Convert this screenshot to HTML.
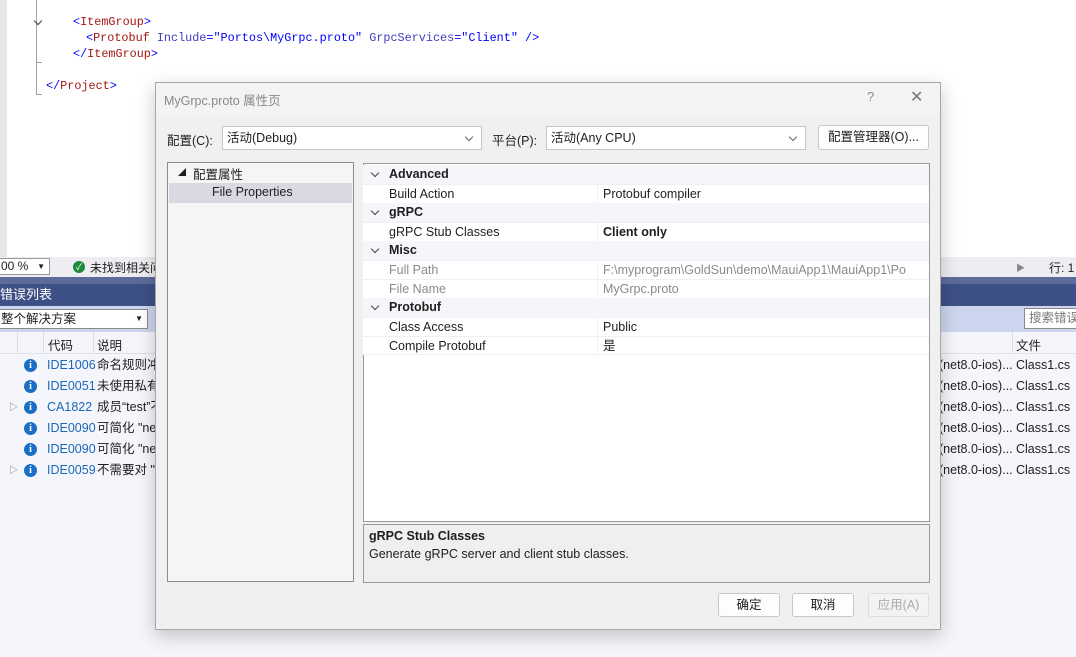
<!DOCTYPE html><html><head><meta charset="utf-8"><style>
*{box-sizing:border-box;margin:0;padding:0}
body{width:1076px;height:657px;position:relative;overflow:hidden;background:#f5f6fb;font-family:"Liberation Sans","Noto Sans CJK SC",sans-serif;font-size:12px;color:#1e1e1e}
.a{position:absolute}
.mono{font-family:"Liberation Mono","Noto Sans CJK SC",monospace;font-size:11.8px}
.r{color:#a31515}.b{color:#0000ff}.n{color:#3f3fbf}
.row{position:absolute;left:0;width:1076px;height:21px;line-height:21px;font-size:12.5px}
.info{position:absolute;left:24px;top:4px;width:13px;height:13px;border-radius:50%;background:#1a6fc4;color:#fff;font-size:10px;line-height:13px;text-align:center;font-weight:bold;font-family:"Liberation Serif",serif}
.code{position:absolute;left:47px;color:#1a66b8}
.desc{position:absolute;left:97px}
.proj{position:absolute;left:939px}
.file{position:absolute;left:1016px}
.pr{position:absolute;left:363px;width:566px;height:19px;line-height:19px;font-size:12.5px}
.pr .k{position:absolute;left:26px}.pr .v{position:absolute;left:240px;white-space:nowrap;overflow:hidden;width:326px}
.cat{background:#f4f6f9;font-weight:bold}
.cat:before{content:"";position:absolute;left:9px;top:5px;width:5px;height:5px;border-right:1px solid #444;border-bottom:1px solid #444;transform:rotate(45deg)}
.item{background:#fff;border-top:1px solid #eef0f3}
.item .v{border-left:1px solid #eef0f3;padding-left:5px;left:234px}
.gray{color:#8a8a8a}
.btn{position:absolute;height:24px;border:1px solid #c8c8c8;border-radius:3px;background:#fdfdfd;text-align:center;line-height:22px;font-size:12.5px}
.combo{position:absolute;height:24px;border:1px solid #c6c6c6;background:#fff;line-height:22px;padding-left:4px;font-size:12.5px}
.combo:after{content:"";position:absolute;right:9px;top:7px;width:5px;height:5px;border-right:1px solid #666;border-bottom:1px solid #666;transform:rotate(45deg)}
</style></head><body>
<div class="a" style="left:0;top:0;width:1076px;height:257px;background:#fff"></div>
<div class="a" style="left:0;top:0;width:7px;height:257px;background:#e6e6e6"></div>
<div class="a" style="left:36px;top:0;width:1px;height:95px;background:#a0a0a0"></div>
<div class="a" style="left:36px;top:62px;width:6px;height:1px;background:#a0a0a0"></div>
<div class="a" style="left:36px;top:94px;width:6px;height:1px;background:#a0a0a0"></div>
<div class="a" style="left:35px;top:18px;width:6px;height:6px;border-right:1px solid #444;border-bottom:1px solid #444;transform:rotate(45deg)"></div>
<div class="a mono" style="left:73px;top:15px"><span class="b">&lt;</span><span class="r">ItemGroup</span><span class="b">&gt;</span></div>
<div class="a mono" style="left:86px;top:31px"><span class="b">&lt;</span><span class="r">Protobuf</span> <span class="n">Include</span><span class="b">="Portos\MyGrpc.proto"</span> <span class="n">GrpcServices</span><span class="b">="Client"</span> <span class="b">/&gt;</span></div>
<div class="a mono" style="left:73px;top:47px"><span class="b">&lt;/</span><span class="r">ItemGroup</span><span class="b">&gt;</span></div>
<div class="a mono" style="left:46px;top:79px"><span class="b">&lt;/</span><span class="r">Project</span><span class="b">&gt;</span></div>
<div class="a" style="left:0;top:257px;width:1076px;height:20px;background:#eeeef2"></div>
<div class="a" style="left:-2px;top:258px;width:52px;height:17px;border:1px solid #999;background:#fff;font-size:12px;line-height:15px;padding-left:2px">00 %<span style="position:absolute;right:4px;font-size:8px">▼</span></div>
<div class="a" style="left:73px;top:261px;width:12px;height:12px;border-radius:50%;background:#1e8a3a;color:#fff;font-size:9px;line-height:12px;text-align:center">✓</div>
<div class="a" style="left:90px;top:259px;font-size:12px">未找到相关问</div>
<div class="a" style="left:1016px;top:261px;font-size:9px;color:#888">▶</div>
<div class="a" style="left:1049px;top:259px;font-size:12px">行: 1</div>
<div class="a" style="left:0;top:277px;width:1076px;height:7px;background:#5d6b9a"></div>
<div class="a" style="left:0;top:284px;width:1076px;height:22px;background:#3e5187;color:#fff;font-size:13px;line-height:22px">错误列表</div>
<div class="a" style="left:0;top:306px;width:1076px;height:26px;background:#cdd6ef"></div>
<div class="a" style="left:-2px;top:309px;width:150px;height:20px;border:1px solid #8a8a8a;background:#fff;font-size:12.5px;line-height:18px;padding-left:2px">整个解决方案<span style="position:absolute;right:4px;font-size:8px">▼</span></div>
<div class="a" style="left:1024px;top:308px;width:60px;height:21px;border:1px solid #8a8a8a;background:#fff;color:#777;font-size:12.5px;line-height:19px;padding-left:4px">搜索错误</div>
<div class="a" style="left:0;top:332px;width:1076px;height:22px;background:#f5f6fb;border-bottom:1px solid #e0e0e8"></div>
<div class="a" style="left:17px;top:332px;width:1px;height:22px;background:#ddd"></div>
<div class="a" style="left:43px;top:332px;width:1px;height:22px;background:#ddd"></div>
<div class="a" style="left:93px;top:332px;width:1px;height:22px;background:#ddd"></div>
<div class="a" style="left:1012px;top:332px;width:1px;height:22px;background:#ddd"></div>
<div class="a" style="left:48px;top:335px;font-size:12.5px">代码</div>
<div class="a" style="left:97px;top:335px;font-size:12.5px">说明</div>
<div class="a" style="left:1016px;top:335px;font-size:12.5px">文件</div>
<div class="row" style="top:355px"><span class="info">i</span><span class="code">IDE1006</span><span class="desc">命名规则冲</span><span class="proj">(net8.0-ios)...</span><span class="file">Class1.cs</span></div>
<div class="row" style="top:376px"><span class="info">i</span><span class="code">IDE0051</span><span class="desc">未使用私有</span><span class="proj">(net8.0-ios)...</span><span class="file">Class1.cs</span></div>
<div class="row" style="top:397px"><span class="a" style="left:9px;color:#777;font-size:9px">▷</span><span class="info">i</span><span class="code">CA1822</span><span class="desc">成员“test”不</span><span class="proj">(net8.0-ios)...</span><span class="file">Class1.cs</span></div>
<div class="row" style="top:418px"><span class="info">i</span><span class="code">IDE0090</span><span class="desc">可简化 "ne</span><span class="proj">(net8.0-ios)...</span><span class="file">Class1.cs</span></div>
<div class="row" style="top:439px"><span class="info">i</span><span class="code">IDE0090</span><span class="desc">可简化 "ne</span><span class="proj">(net8.0-ios)...</span><span class="file">Class1.cs</span></div>
<div class="row" style="top:460px"><span class="a" style="left:9px;color:#777;font-size:9px">▷</span><span class="info">i</span><span class="code">IDE0059</span><span class="desc">不需要对 "</span><span class="proj">(net8.0-ios)...</span><span class="file">Class1.cs</span></div>
<div class="a" style="left:155px;top:82px;width:786px;height:548px;background:#f0f0f0;border:1px solid #a8a8a8;box-shadow:0 6px 18px rgba(0,0,0,0.22)">
 <div class="a" style="left:0;top:0;width:784px;height:32px;background:#f3f3f3"></div>
 <div class="a" style="left:8px;top:7px;font-size:12.5px;color:#888">MyGrpc.proto 属性页</div>
 <div class="a" style="left:711px;top:6px;font-size:13px;color:#888">?</div>
 <div class="a" style="left:754px;top:4px;font-size:16px;color:#777">✕</div>
 <div class="a" style="left:11px;top:47px;font-size:12.5px">配置(C):</div>
 <div class="combo" style="left:66px;top:43px;width:260px">活动(Debug)</div>
 <div class="a" style="left:336px;top:47px;font-size:12.5px">平台(P):</div>
 <div class="combo" style="left:390px;top:43px;width:260px">活动(Any CPU)</div>
 <div class="btn" style="left:662px;top:42px;width:111px;height:25px">配置管理器(O)...</div>
 <div class="a" style="left:11px;top:79px;width:187px;height:420px;border:1px solid #8c8c8c;background:#f5f5f5"></div>
 <div class="a" style="left:22px;top:84px;font-size:8px">◢</div>
 <div class="a" style="left:37px;top:81px;font-size:12.5px">配置属性</div>
 <div class="a" style="left:13px;top:100px;width:183px;height:20px;background:#d9d9e3"></div>
 <div class="a" style="left:56px;top:102px;font-size:12.5px">File Properties</div>
 <div class="a" style="left:207px;top:80px;width:567px;height:359px;border:1px solid #999;background:#fff"></div>
 <div class="a" style="left:207px;top:441px;width:567px;height:59px;border:1px solid #999;background:#efefef"></div>
 <div class="a" style="left:213px;top:446px;font-size:12.5px;font-weight:bold">gRPC Stub Classes</div>
 <div class="a" style="left:213px;top:464px;font-size:12.5px">Generate gRPC server and client stub classes.</div>
 <div class="btn" style="left:562px;top:510px;width:62px">确定</div>
 <div class="btn" style="left:636px;top:510px;width:62px">取消</div>
 <div class="btn" style="left:712px;top:510px;width:61px;color:#aaa;border-color:#ddd;background:#f3f3f3">应用(A)</div>
</div>
<div class="pr cat" style="top:165px"><span class="k">Advanced</span></div>
<div class="pr item" style="top:184px"><span class="k">Build Action</span><span class="v">Protobuf compiler</span></div>
<div class="pr cat" style="top:203px"><span class="k">gRPC</span></div>
<div class="pr item" style="top:222px"><span class="k">gRPC Stub Classes</span><span class="v" style="font-weight:bold">Client only</span></div>
<div class="pr cat" style="top:241px"><span class="k">Misc</span></div>
<div class="pr item gray" style="top:260px"><span class="k">Full Path</span><span class="v">F:\myprogram\GoldSun\demo\MauiApp1\MauiApp1\Po</span></div>
<div class="pr item gray" style="top:279px"><span class="k">File Name</span><span class="v">MyGrpc.proto</span></div>
<div class="pr cat" style="top:298px"><span class="k">Protobuf</span></div>
<div class="pr item" style="top:317px"><span class="k">Class Access</span><span class="v">Public</span></div>
<div class="pr item" style="top:336px;border-bottom:1px solid #eef0f3"><span class="k">Compile Protobuf</span><span class="v">是</span></div>
</body></html>
